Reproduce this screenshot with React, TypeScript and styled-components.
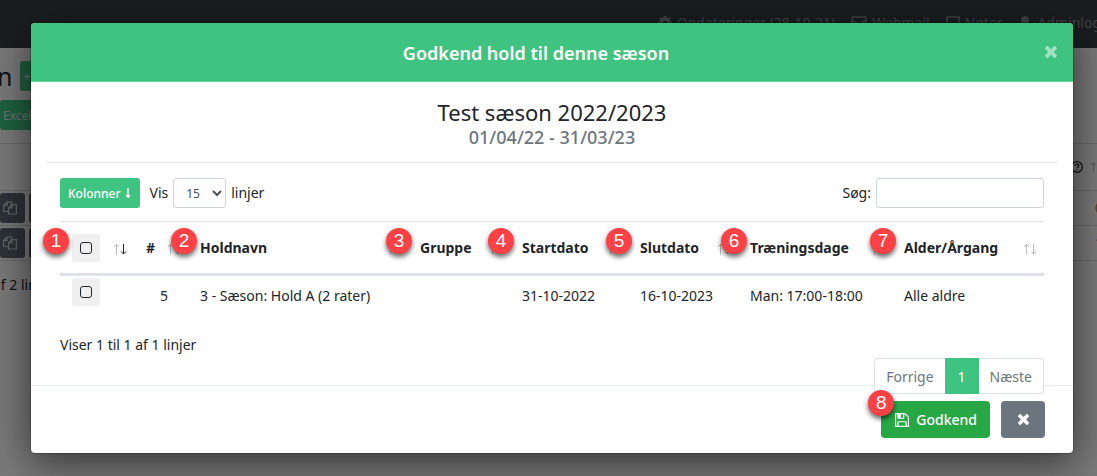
import React from "react";
import styled, { createGlobalStyle, css } from "styled-components";

const green = "#3fc380";
const line = "#dee2e6";
const ink = "#212529";
const muted = "#6c757d";

const GlobalStyle = createGlobalStyle`
  *, *::before, *::after { box-sizing: border-box; }
  body {
    margin: 0;
    background: #f5f5f5;
    color: ${ink};
    font-family: "Noto Sans", "Open Sans", sans-serif;
    font-size: 14px;
    line-height: 22px;
  }
  button, input, select { font-family: inherit; }
`;

/* ---------- icons ---------- */

const Icon = styled.svg<{ $size?: number }>`
  display: block;
  flex: none;
  width: ${(p) => p.$size ?? 16}px;
  height: ${(p) => p.$size ?? 16}px;
  fill: currentColor;
`;

const LineIcon = styled(Icon)`
  fill: none;
  stroke: currentColor;
`;

const TimesIcon = ({ size }: { size: number }) => (
  <Icon $size={size} viewBox="302 366 1188 1188" aria-hidden="true">
    <path d="M1490 1322q0 40-28 68l-136 136q-28 28-68 28t-68-28l-294-294-294 294q-28 28-68 28t-68-28l-136-136q-28-28-28-68t28-68l294-294-294-294q-28-28-28-68t28-68l136-136q28-28 68-28t68 28l294 294 294-294q28-28 68-28t68 28l136 136q28 28 28 68t-28 68l-294 294 294 294q28 28 28 68z" />
  </Icon>
);

const SaveIcon = () => (
  <Icon $size={14} viewBox="0 128 1536 1536" aria-hidden="true">
    <path d="M384 1536h768v-384h-768v384zm896 0h128v-896q0-14-10-38.5t-20-34.5l-281-281q-10-10-34-20t-39-10v416q0 40-28 68t-68 28h-576q-40 0-68-28t-28-68v-416h-128v1280h128v-416q0-40 28-68t68-28h832q40 0 68 28t28 68v416zm-384-928v-320q0-13-9.5-22.5t-22.5-9.5h-192q-13 0-22.5 9.5t-9.5 22.5v320q0 13 9.5 22.5t22.5 9.5h192q13 0 22.5-9.5t9.5-22.5zm640 32v928q0 40-28 68t-68 28h-1344q-40 0-68-28t-28-68v-1344q0-40 28-68t68-28h928q40 0 88 20t76 48l280 280q28 28 48 76t20 88z" />
  </Icon>
);

const CogIcon = () => (
  <Icon $size={14} viewBox="128 128 1536 1536" aria-hidden="true">
    <path d="M1152 896q0-106-75-181t-181-75-181 75-75 181 75 181 181 75 181-75 75-181zm512-109v222q0 12-8 23t-20 13l-185 28q-19 54-39 91 35 50 107 138 10 12 10 25t-9 23q-27 37-99 108t-94 71q-12 0-26-9l-138-108q-44 23-91 38-16 136-29 186-7 28-36 28h-222q-14 0-24.5-8.5t-11.5-21.5l-28-184q-49-16-90-37l-141 107q-10 9-25 9-14 0-25-11-126-114-165-168-7-10-7-23 0-12 8-23 15-21 51-66.5t54-70.5q-27-50-41-99l-183-27q-13-2-21-12.5t-8-23.5v-222q0-12 8-23t19-13l186-28q14-46 39-92-40-57-107-138-10-12-10-24 0-10 9-23 26-36 98.5-107.5t94.5-71.5q13 0 26 10l138 107q44-23 91-38 16-136 29-186 7-28 36-28h222q14 0 24.5 8.5t11.5 21.5l28 184q49 16 90 37l142-107q9-9 24-9 13 0 25 10 129 119 165 170 7 8 7 22 0 12-8 23-15 21-51 66.5t-54 70.5q26 50 41 98l183 28q13 2 21 12.5t8 23.5z" />
  </Icon>
);

const MailIcon = () => (
  <LineIcon viewBox="0 0 16 16" strokeWidth="1.5" aria-hidden="true">
    <rect x="1" y="2" width="14" height="12" rx="1" />
    <path d="M1 5l7 5 7-5" />
  </LineIcon>
);

const NoteIcon = () => (
  <LineIcon $size={14} viewBox="0 0 14 14" strokeWidth="1.5" aria-hidden="true">
    <path d="M1 1h12v8l-4 4H1zM9 13V9h4" />
  </LineIcon>
);

const UserIcon = () => (
  <Icon $size={14} viewBox="0 0 14 14" aria-hidden="true">
    <circle cx="7" cy="4" r="4" />
    <path d="M1 14c0-4 2-6 6-6s6 2 6 6z" />
  </Icon>
);

const CopyIcon = () => (
  <LineIcon $size={14} viewBox="0 0 14 14" strokeWidth="1.2" aria-hidden="true">
    <path d="M5 10.500H.6V4.500L4 1.200h4.500V4M4 1.200v3.300H.6" />
    <path d="M5.500 7L9 3.600h4.400v9.400H5.500zM9 3.600V7H5.500" />
  </LineIcon>
);

const HelpIcon = () => (
  <LineIcon $size={12} viewBox="0 0 12 12" strokeWidth="1.3" aria-hidden="true">
    <circle cx="6" cy="6" r="5.300" />
    <path d="M4.200 4.800c0-2.200 3.600-2.200 3.600 0C7.800 6 6 6 6 7.300M6 8.200v1.300" />
  </LineIcon>
);

const DownArrowIcon = () => (
  <LineIcon $size={12} viewBox="0 0 12 12" strokeWidth="1.400" aria-hidden="true">
    <path d="M6 1v9M4 8l2 2.500L8 8" />
  </LineIcon>
);

const SortArrows = styled.svg`
  display: block;
  width: 14px;
  height: 12px;
  fill: none;
  stroke: ${ink};
`;

const SortSlot = styled.span`
  position: absolute;
  right: 7px;
  bottom: 18px;
`;

const SortIcon = ({ active }: { active?: boolean }) => (
  <SortArrows viewBox="0 0 14 12" aria-hidden="true">
    <path d="M3.500 11.500V1.500M1 4l2.500-2.500L6 4" opacity=".3" />
    <path d="M10.500 1v10M8 8.500L10.500 11 13 8.500" opacity={active ? 1 : 0.3} />
  </SortArrows>
);

/* ---------- page behind the dialog ---------- */

const Screen = styled.div`
  position: relative;
  min-height: 100vh;
  overflow: hidden;
`;

const Backdrop = styled.div`
  position: absolute;
  inset: 0;
  overflow: hidden;
  &::after {
    content: "";
    position: absolute;
    inset: 0;
    background: rgba(0, 0, 0, 0.5);
  }
`;

const NavBar = styled.nav`
  display: flex;
  justify-content: flex-end;
  align-items: center;
  gap: 16px;
  height: 48px;
  margin-right: -4px;
  padding-bottom: 2px;
  background: #373d43;
  color: #85888b;
  white-space: nowrap;
`;

const NavItem = styled.a`
  display: flex;
  align-items: center;
  gap: 5px;
  color: inherit;
  text-decoration: none;
`;

const PageHead = styled.div`
  display: flex;
  align-items: center;
  gap: 8px;
  height: 52px;
  padding-top: 4px;
  margin-left: -3px;
`;

const PageTitle = styled.h1`
  margin: 0;
  font-size: 25px;
  font-weight: 400;
`;

const PageButton = styled.button<{ $dark?: boolean }>`
  display: flex;
  align-items: center;
  justify-content: center;
  height: 30px;
  padding: 0 10px 0 3px;
  border: 0;
  border-radius: 3px;
  background: ${(p) => (p.$dark ? "#5a6570" : green)};
  color: ${(p) => (p.$dark ? "#c4c8cc" : "#e3e3e3")};
  font-size: 12px;
  ${(p) =>
    p.$dark &&
    css`
      width: 25px;
      padding: 0 6px 0 0;
    `}
`;

const PageRow = styled.div<{ $tall?: boolean }>`
  display: flex;
  align-items: center;
  justify-content: space-between;
  height: ${(p) => (p.$tall ? 47 : 35)}px;
  border-bottom: 1px solid #cfd1d3;
`;

const PageGap = styled.div`
  height: 14px;
  border-bottom: 1px solid #cfd1d3;
`;

const PageActions = styled.div`
  display: flex;
  gap: 4px;
`;

const PageHelp = styled.div`
  display: flex;
  align-items: center;
  gap: 7px;
  margin-right: -7px;
`;

const PageCount = styled.span`
  margin-right: -6px;
  color: #b8860b;
`;

const PageInfo = styled.p`
  margin: 13px 0 0 -7px;
`;

/* ---------- dialog ---------- */

const DialogWrap = styled.div`
  position: relative;
  padding: 22px 23px 22px 30px;
`;

const Dialog = styled.section`
  border: 1px solid rgba(0, 0, 0, 0.2);
  border-radius: 5px;
  background: #fff;
  background-clip: padding-box;
  box-shadow: 0 8px 40px rgba(0, 0, 0, 0.6);
`;

const DialogHead = styled.header`
  display: grid;
  grid-template-columns: 12px 1fr 44px;
  align-items: center;
  height: 59px;
  border-bottom: 1px solid #6fd3a0;
  border-radius: 4px 4px 0 0;
  background: ${green};
  color: #fff;
`;

const DialogTitle = styled.h2`
  grid-column: 2;
  margin: 0;
  padding-top: 2px;
  font-size: 18px;
  font-weight: 600;
  line-height: 24px;
  text-align: center;
`;

const CloseButton = styled.button`
  display: flex;
  justify-content: center;
  padding: 4px;
  border: 0;
  background: none;
  color: rgba(255, 255, 255, 0.5);
`;

const DialogBody = styled.div`
  height: 303px;
  padding: 16px 15px 0;
`;

const Season = styled.div`
  padding-bottom: 14px;
  border-bottom: 1px solid #e9e9ea;
  text-align: center;
`;

const SeasonName = styled.h3`
  margin: 0;
  font-size: 22px;
  font-weight: 400;
  line-height: 28px;
`;

const SeasonDates = styled.p`
  margin: 0;
  color: ${muted};
  font-size: 18px;
  font-weight: 500;
  line-height: 22px;
`;

const Content = styled.div`
  padding: 15px 14px 0;
`;

const Toolbar = styled.div`
  display: flex;
  align-items: center;
  justify-content: space-between;
  height: 30px;
`;

const ToolGroup = styled.div`
  display: flex;
  align-items: center;
  gap: 10px;
`;

const ColumnsButton = styled.button`
  display: flex;
  align-items: center;
  gap: 1px;
  height: 30px;
  padding: 0 6px 0 8px;
  border: 0;
  border-radius: 3px;
  background: ${green};
  color: #fff;
  font-size: 12px;
  font-weight: 500;
`;

const FieldLabel = styled.label`
  display: flex;
  align-items: center;
  gap: 5px;
`;

const fieldBox = css`
  height: 30px;
  border: 1px solid #ced4da;
  border-radius: 3px;
  background: #fff;
  color: #495057;
  font-size: 12px;
`;

const LengthSelect = styled.select`
  ${fieldBox}
  width: 53px;
  padding: 0 0 0 8px;
`;

const SearchInput = styled.input`
  ${fieldBox}
  width: 168px;
  padding: 4px 8px;
`;

const TeamTable = styled.table`
  width: 100%;
  margin-top: 13px;
  border-collapse: separate;
  border-spacing: 0;
  table-layout: fixed;
`;

const Col = styled.col<{ $width?: number }>`
  width: ${(p) => (p.$width ? `${p.$width}px` : "auto")};
`;

const HeadCell = styled.th`
  position: relative;
  height: 55px;
  padding: 0 12px;
  border-top: 1px solid ${line};
  border-bottom: 3px solid ${line};
  font-weight: 700;
  text-align: left;
  white-space: nowrap;
`;

const Cell = styled.td<{ $right?: boolean }>`
  height: 39px;
  padding: 2px ${(p) => (p.$right ? 20 : 12)}px 2px 12px;
  text-align: ${(p) => (p.$right ? "right" : "left")};
  white-space: nowrap;
`;

const CheckCell = styled(Cell)`
  vertical-align: top;
`;

const CheckLabel = styled.label`
  display: flex;
  align-items: center;
  justify-content: center;
  width: 28px;
  height: 28px;
  border-radius: 3px;
  background: #efefef;
`;

const Check = styled.input`
  appearance: none;
  width: 12px;
  height: 12px;
  margin: 0;
  border: 1px solid ${ink};
  border-radius: 3px;
  &:checked { background: ${ink}; }
`;

const Marker = styled.span<{ $place?: "near" | "far" | "corner" }>`
  position: absolute;
  top: ${(p) => (p.$place === "corner" ? -11 : 6)}px;
  left: ${(p) => (p.$place === "corner" ? -13 : p.$place === "far" ? -22 : -17)}px;
  z-index: 1;
  width: 26px;
  height: 26px;
  border-radius: 50%;
  background: #fc4146;
  box-shadow: 0 3px 5px rgba(0, 0, 0, 0.6);
  color: #fff;
  font-family: "Liberation Sans", Arial, sans-serif;
  font-size: 19px;
  font-weight: 400;
  line-height: 26px;
  text-align: center;
`;

const TableInfo = styled.p`
  margin: 19px 0 0;
`;

const Pager = styled.nav`
  position: relative;
  display: flex;
  justify-content: flex-end;
  margin-top: 2px;
`;

const PageLink = styled.a<{ $active?: boolean }>`
  height: 36px;
  padding: 0 ${(p) => (p.$active ? 12 : 11)}px;
  border: 1px solid ${(p) => (p.$active ? green : line)};
  background: ${(p) => (p.$active ? green : "#fff")};
  color: ${(p) => (p.$active ? "#fff" : muted)};
  line-height: 36px;
  text-decoration: none;
  &:first-child { border-right: 0; border-radius: 4px 0 0 4px; }
  &:last-child { border-left: 0; border-radius: 0 4px 4px 0; }
`;

const DialogFoot = styled.footer`
  display: flex;
  justify-content: flex-end;
  gap: 11px;
  padding: 15px 28px 15px 0;
  border-top: 1px solid #e9ecef;
`;

const FootButton = styled.button<{ $tone: string }>`
  position: relative;
  display: flex;
  align-items: center;
  justify-content: center;
  gap: 7px;
  min-width: 44px;
  height: 37px;
  padding: 0 13px 0 14px;
  border: 0;
  border-radius: 4px;
  background: ${(p) => p.$tone};
  color: #fff;
  font-size: 14px;
  font-weight: 500;
`;

type Column = {
  title: string;
  width?: number;
  marker?: number;
  place?: "near" | "far";
};

const columns: Column[] = [
  { title: "#", width: 54 },
  { title: "Holdnavn", marker: 2 },
  { title: "Gruppe", width: 102, marker: 3, place: "far" },
  { title: "Startdato", width: 118, marker: 4, place: "far" },
  { title: "Slutdato", width: 110, marker: 5, place: "far" },
  { title: "Træningsdage", width: 154, marker: 6 },
  { title: "Alder/Årgang", width: 152, marker: 7, place: "far" },
];

const team = ["5", "3 - Sæson: Hold A (2 rater)", "", "31-10-2022", "16-10-2023", "Man: 17:00-18:00", "Alle aldre"];

export default function App() {
  return (
    <Screen>
      <GlobalStyle />
      <Backdrop aria-hidden="true">
        <NavBar>
          <NavItem href="#"><CogIcon />Opdateringer (28-10-21)</NavItem>
          <NavItem href="#"><MailIcon />Webmail</NavItem>
          <NavItem href="#"><NoteIcon />Noter</NavItem>
          <NavItem href="#"><UserIcon />Adminlog</NavItem>
        </NavBar>
        <PageHead>
          <PageTitle>n</PageTitle>
          <PageButton>+</PageButton>
        </PageHead>
        <PageButton>Excel</PageButton>
        <PageGap />
        <PageRow $tall>
          <span />
          <PageHelp><HelpIcon /><SortIcon /></PageHelp>
        </PageRow>
        {["0", "1"].map((count) => (
          <PageRow key={count}>
            <PageActions>
              <PageButton $dark><CopyIcon /></PageButton>
              <PageButton $dark />
            </PageActions>
            <PageCount>{count}</PageCount>
          </PageRow>
        ))}
        <PageInfo>af 2 linjer</PageInfo>
      </Backdrop>

      <DialogWrap>
        <Dialog role="dialog" aria-labelledby="dialog-title">
          <DialogHead>
            <DialogTitle id="dialog-title">Godkend hold til denne sæson</DialogTitle>
            <CloseButton aria-label="Luk"><TimesIcon size={12} /></CloseButton>
          </DialogHead>
          <DialogBody>
            <Season>
              <SeasonName>Test sæson 2022/2023</SeasonName>
              <SeasonDates>01/04/22 - 31/03/23</SeasonDates>
            </Season>
            <Content>
              <Toolbar>
                <ToolGroup>
                  <ColumnsButton>Kolonner<DownArrowIcon /></ColumnsButton>
                  <FieldLabel>
                    Vis
                    <LengthSelect defaultValue="15">
                      <option>15</option>
                      <option>50</option>
                    </LengthSelect>
                    linjer
                  </FieldLabel>
                </ToolGroup>
                <FieldLabel>
                  Søg:
                  <SearchInput type="search" />
                </FieldLabel>
              </Toolbar>
              <TeamTable>
                <colgroup>
                  <Col $width={74} />
                  {columns.map((c) => <Col key={c.title} $width={c.width} />)}
                </colgroup>
                <thead>
                  <tr>
                    <HeadCell>
                      <Marker>1</Marker>
                      <CheckLabel><Check type="checkbox" aria-label="Vælg alle" /></CheckLabel>
                      <SortSlot><SortIcon active /></SortSlot>
                    </HeadCell>
                    {columns.map((c) => (
                      <HeadCell key={c.title}>
                        {c.marker && <Marker $place={c.place}>{c.marker}</Marker>}
                        {c.title}
                        <SortSlot><SortIcon /></SortSlot>
                      </HeadCell>
                    ))}
                  </tr>
                </thead>
                <tbody>
                  <tr>
                    <CheckCell>
                      <CheckLabel><Check type="checkbox" aria-label="Vælg hold" /></CheckLabel>
                    </CheckCell>
                    {team.map((value, i) => <Cell key={i} $right={i === 0}>{value}</Cell>)}
                  </tr>
                </tbody>
              </TeamTable>
              <TableInfo>Viser 1 til 1 af 1 linjer</TableInfo>
              <Pager>
                <PageLink href="#">Forrige</PageLink>
                <PageLink href="#" $active>1</PageLink>
                <PageLink href="#">Næste</PageLink>
              </Pager>
            </Content>
          </DialogBody>
          <DialogFoot>
            <FootButton $tone="#28a745">
              <Marker $place="corner">8</Marker>
              <SaveIcon />
              Godkend
            </FootButton>
            <FootButton $tone={muted} aria-label="Luk"><TimesIcon size={11} /></FootButton>
          </DialogFoot>
        </Dialog>
      </DialogWrap>
    </Screen>
  );
}
